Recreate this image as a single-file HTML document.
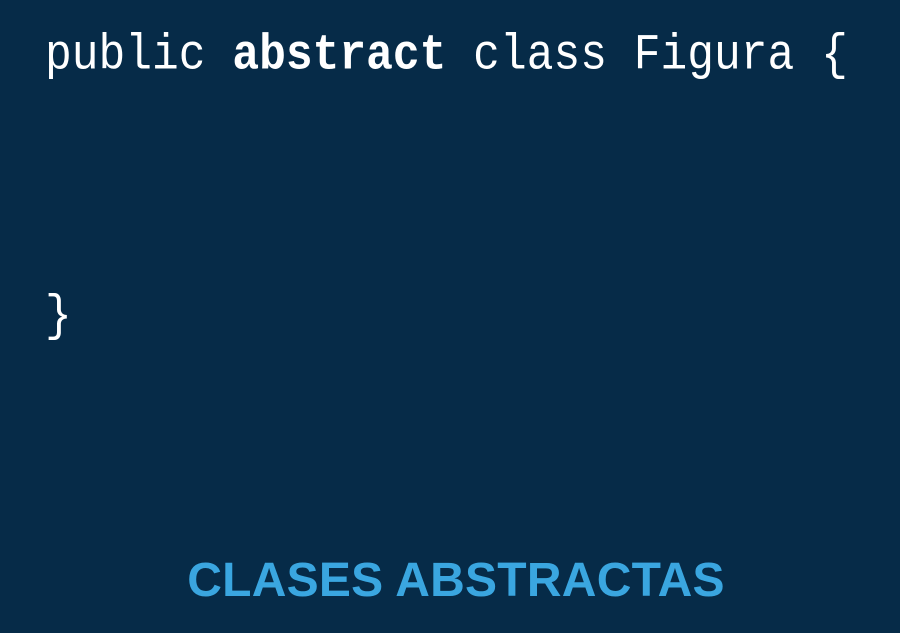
<!DOCTYPE html>
<html><head><meta charset="utf-8"><style>
html,body{margin:0;padding:0}
body{width:900px;height:633px;background:#062b48;position:relative;overflow:hidden}
.code{position:absolute;left:45px;font-family:"Liberation Mono","DejaVu Sans Mono",monospace;font-size:44.6px;color:#fff;white-space:pre;line-height:1;transform:scaleY(1.12);transform-origin:0 100%}
.t{position:absolute;left:6px;width:900px;text-align:center;top:557px;font-family:"Liberation Sans",sans-serif;font-weight:bold;font-size:48px;letter-spacing:0.25px;color:#3aa6e0;line-height:1}
</style></head><body>
<div class="code" style="top:37px">public <b>abstract</b> class Figura {</div>
<div class="code" style="top:298px">}</div>
<div class="t">CLASES ABSTRACTAS</div>
</body></html>
